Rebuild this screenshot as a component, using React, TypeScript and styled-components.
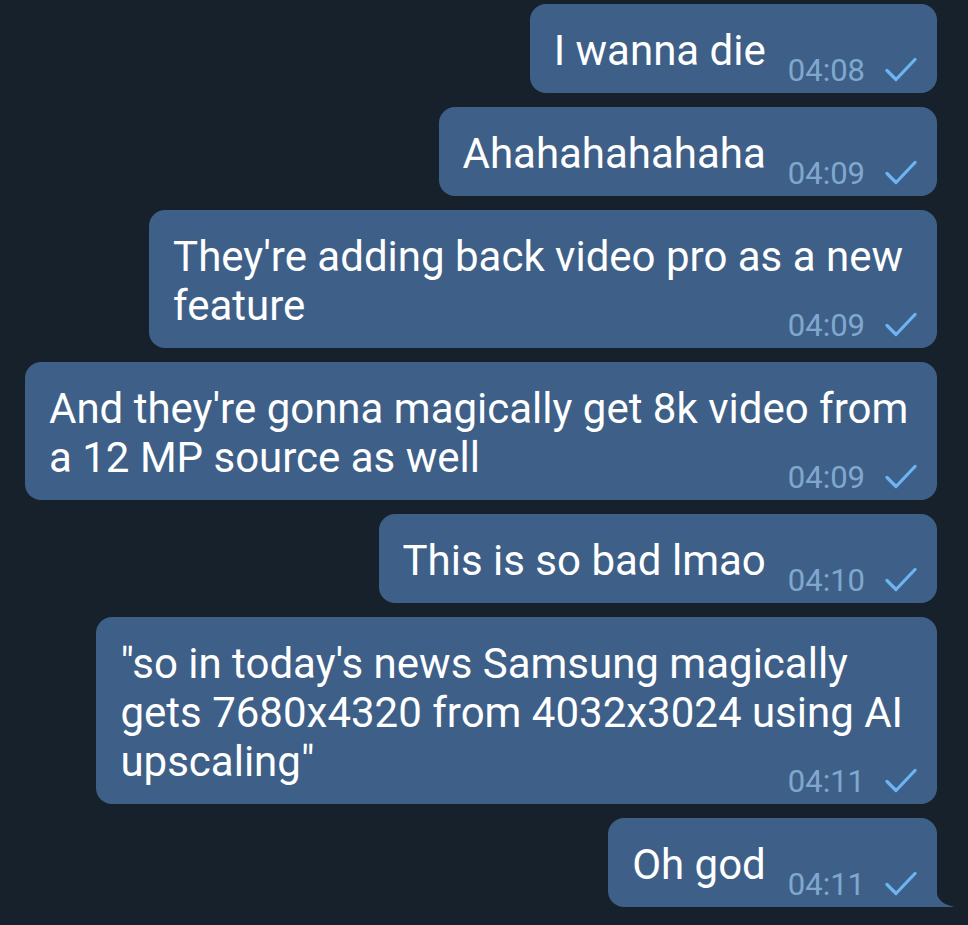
import React from "react";
import styled, { createGlobalStyle } from "styled-components";

const Global = createGlobalStyle`
  html, body { margin: 0; padding: 0; background: #17212b; }
  body { font-family: Roboto, "Noto Sans", sans-serif; -webkit-font-smoothing: antialiased; }
`;

const Chat = styled.div`
  width: 968px;
  height: 925px;
  box-sizing: border-box;
  background: #17212b;
  padding: 4px 31px 0 0;
  display: flex;
  flex-direction: column;
  align-items: flex-end;
  gap: 14px;
  overflow: hidden;
`;

const Bubble = styled.div<{ $stacked?: boolean; $tail?: boolean }>`
  position: relative;
  box-sizing: border-box;
  max-width: 912px;
  background: #3e6088;
  border-radius: ${(p) => (p.$tail ? "16px 16px 0 16px" : "16px")};
  padding: 22px 20px 8px 24px;
  display: flex;
  flex-direction: ${(p) => (p.$stacked ? "column" : "row")};
  align-items: flex-end;
`;

const Text = styled.div<{ $stacked?: boolean }>`
  color: #ffffff;
  font-size: 42px;
  line-height: 49px;
  white-space: pre;
  display: flex;
  flex-direction: column;
  align-items: flex-start;
  align-self: ${(p) => (p.$stacked ? "flex-start" : "auto")};
  margin-bottom: ${(p) => (p.$stacked ? "0" : "10px")};
  padding-right: ${(p) => (p.$stacked ? "14px" : "0")};
`;

const Line = styled.span`
  display: block;
`;

const Meta = styled.div<{ $stacked?: boolean }>`
  display: flex;
  align-items: center;
  gap: 20px;
  margin-left: ${(p) => (p.$stacked ? "0" : "22px")};
  margin-top: ${(p) => (p.$stacked ? "-21px" : "0")};
  height: 31px;
`;

const Time = styled.span`
  color: #80a8cf;
  font-size: 31px;
  line-height: 31px;
  position: relative;
  top: 1px;
`;

const Check = () => (
  <svg width="32" height="26" viewBox="0 0 32 26" fill="none">
    <path d="M2 13.5 L11 22.5 L30 2.5" stroke="#6cb4f2" strokeWidth="3.2" strokeLinecap="round" strokeLinejoin="round" />
  </svg>
);

const Tail = styled.svg`
  position: absolute;
  right: -17px;
  bottom: 0;
`;

type Msg = { lines: string[]; time: string; stacked?: boolean; tail?: boolean };

const messages: Msg[] = [
  { lines: ["I wanna die"], time: "04:08" },
  { lines: ["Ahahahahahaha"], time: "04:09" },
  { lines: ["They're adding back video pro as a new", "feature"], time: "04:09", stacked: true },
  { lines: ["And they're gonna magically get 8k video from", "a 12 MP source as well"], time: "04:09", stacked: true },
  { lines: ["This is so bad lmao"], time: "04:10" },
  {
    lines: ["\"so in today's news Samsung magically", "gets 7680x4320 from 4032x3024 using AI", "upscaling\""],
    time: "04:11",
    stacked: true,
  },
  { lines: ["Oh god"], time: "04:11", tail: true },
];

export default function App() {
  return (
    <>
      <Global />
      <Chat>
        {messages.map((m, i) => (
          <Bubble key={i} $stacked={m.stacked} $tail={m.tail}>
            <Text $stacked={m.stacked}>
              {m.lines.map((l, j) => (
                <Line key={j}>{l}</Line>
              ))}
            </Text>
            <Meta $stacked={m.stacked}>
              <Time>{m.time}</Time>
              <Check />
            </Meta>
            {m.tail && (
              <Tail width="18" height="20" viewBox="0 0 18 20">
                <path d="M0 0 C0 10 4 17 17 19.5 C17.5 19.6 17.5 20 17 20 L0 20 Z" fill="#3e6088" />
              </Tail>
            )}
          </Bubble>
        ))}
      </Chat>
    </>
  );
}
